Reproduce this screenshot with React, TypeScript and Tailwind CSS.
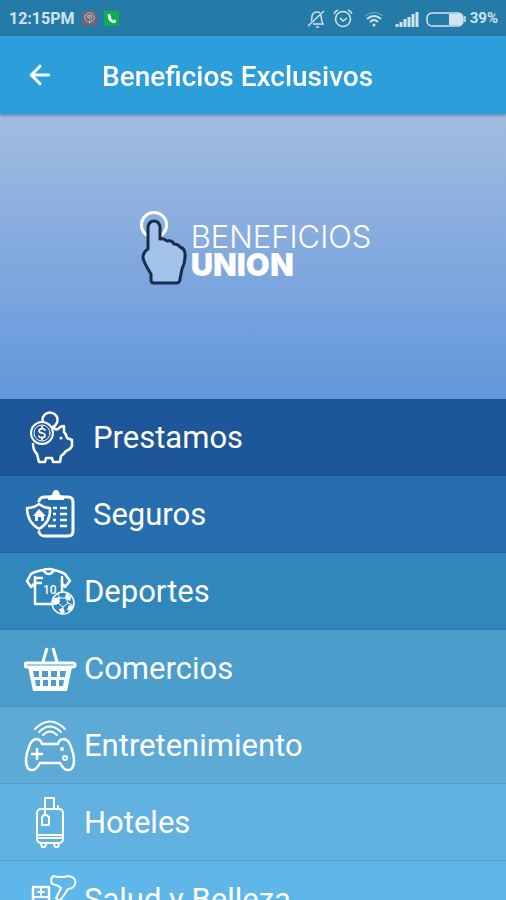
import { ArrowLeft } from "lucide-react";
import type { ReactNode } from "react";

const PrestamosIcon = () => (
    <>
        <circle cx="26" cy="10" r="7.500" />
        <path d="M30 18q3 3 5 0q2-2 5-2v6q2 2 3 6l5 2v6q-2 4-6 5q-2 3-5 5l-1 6h-7l-1-4h-6l-1 4h-6l-2-8q-4-4-4-10" />
        <circle cx="18" cy="23" r="11" strokeWidth="2" className="fill-[#1e5799]" />
        <circle cx="18" cy="23" r="8" strokeWidth="1" />
        <path d="M21 20q-1-1.500-3-1.500t-3 2q0 2 3 2.500t3 2.500q0 2-3 2t-3-1.500M18 16.500v2M18 28v1.500" strokeWidth="1.750" />
        <circle cx="37" cy="28" r="1.500" fill="currentColor" stroke="none" />
    </>
);

const SegurosIcon = () => (
    <>
        <path d="M15 14q1-4 6-4h23q5 0 5 5v29q0 5-5 5H21q-5 0-6-4" strokeWidth="3" />
        <path d="M24 13V9l4-1q1-5 4-5t4 5l4 1v4z" fill="currentColor" stroke="none" />
        <path d="M29 21h4M36 21h7M29 27h3M36 27h7M29 33h3M36 33h7M24 39h8M36 39h7" strokeWidth="2.500" strokeLinecap="butt" />
        <path d="M15 17q5 4 11 4q1 14-11 21q-12-7-12-21q7 0 12-4z" className="fill-[#276eae]" />
        <path d="M15 22l7 7h-2v5h-3v-4h-3v4h-3v-5H9z" fill="currentColor" stroke="none" />
    </>
);

const DeportesIcon = () => (
    <>
        <path d="M19 6q6 8 11 0M19 6Q9 8 7 10l-4 7l4 6l4-4v21h17M30 6q8 2 11 4l5 7l-5 6l-3-4v8M19 6q6-2 11 0M11 13v6M38 13v6M11 14h7M11 19h6" />
        <text x="19" y="30" className="font-[Roboto] text-[12px] font-medium" fill="currentColor" stroke="none">10</text>
        <circle cx="39" cy="39" r="11" strokeWidth="1.500" className="fill-[#3087bb]" />
        <path d="M36 34h6l2 5l-5 4l-5-4zM36 34l-2-4M42 34l2-4M44 39l5 2M39 43v4M34 39l-5 2" strokeWidth="1" />
        <path d="M30 34l5-1l1 5l-4 3l-4-2zM42 29l5 4l-1 4l-5-3zM45 41l4 1l-2 5l-4-1zM35 45l4-1l2 4l-4 2z" fill="currentColor" stroke="none" />
    </>
);

const ComerciosIcon = () => (
    <>
        <path d="M23 7l-4 14M29 7l4 14" strokeWidth="3" strokeLinecap="butt" />
        <rect x="1" y="22" width="50" height="4" rx="2" strokeWidth="3" />
        <path
            d="M4 26h44l-5 24H9zM9 30l1 6h5v-6zM18 30v6h6v-6zM27 30v6h6v-6zM36 30v6h5l1-6zM11 39l1 6h4v-6zM19 39v6h5v-6zM27 39v6h5v-6zM35 39v6h4l1-6z"
            fill="currentColor"
            fillRule="evenodd"
            stroke="none"
        />
    </>
);

const EntretenimientoIcon = () => (
    <>
        <path d="M11 11q15-15 30 0M15 14q11-11 22 0M19 17q7-7 14 0" strokeWidth="2" />
        <path d="M18 26q-1-5-6-5q-5 1-7 8q-3 7-3 13q0 11 7 10q3 0 7-7h20q4 7 7 7q7 1 7-10q0-6-3-13q-2-7-7-8q-5 0-6 5z" />
        <path d="M13 31v10M8 36h10" />
        <circle cx="38" cy="31" r="2" fill="currentColor" stroke="none" />
        <circle cx="41" cy="40" r="2" strokeWidth="2" />
    </>
);

const HotelesIcon = () => (
    <>
        <rect x="13" y="14" width="26" height="34" rx="4" strokeWidth="2" />
        <path d="M13 40h26M13 43h26M21 19V3h9v11M34 13v-2M18 22l3-3l4 3v8h-7zM17 49l1 3h3l1-3M30 49l1 3h3l1-3" strokeWidth="2" />
    </>
);

const SaludIcon = () => (
    <>
        <rect x="9" y="15" width="16" height="34" />
        <path d="M17 17v6M14 20h6M9 25h16M13 29h2M19 29h2" strokeWidth="2" />
        <path d="M29 4q8 2 16 0q8 2 6 8q-2 5-7 5l-8 12l-4-3l5-10q-3-3-9-4q-2-5 1-8z" strokeWidth="2" />
    </>
);

type Category = {
    name: string;
    icon: ReactNode;
    row: string;
    gap: string;
};

const categories: Category[] = [
    { name: "Prestamos", icon: <PrestamosIcon />, row: "bg-[#1e5799] border-[#1c5190]", gap: "gap-4" },
    { name: "Seguros", icon: <SegurosIcon />, row: "bg-[#276eae] border-[#2467a5]", gap: "gap-4" },
    { name: "Deportes", icon: <DeportesIcon />, row: "bg-[#3087bb] border-[#2b7cad]", gap: "gap-[7px]" },
    { name: "Comercios", icon: <ComerciosIcon />, row: "bg-[#4b9dcb] border-[#4591be]", gap: "gap-[7px]" },
    { name: "Entretenimiento", icon: <EntretenimientoIcon />, row: "bg-[#5eaad6] border-[#559cc6]", gap: "gap-[7px]" },
    { name: "Hoteles", icon: <HotelesIcon />, row: "bg-[#61b2e0] border-[#559fc9]", gap: "gap-[7px]" },
    { name: "Salud y Belleza", icon: <SaludIcon />, row: "bg-[#5eb6e9] border-[#54a2d0]", gap: "gap-[7px]" },
];

const StatusIcons = () => (
    <svg viewBox="0 0 160 20" className="h-5 w-40" fill="none" stroke="currentColor" strokeWidth="1.500">
        {/* muted bell */}
        <path d="M1 17L17 2M4 12q1-1 1-5q1-4 5-4q2 0 3 1M14 6q0 5 2 9H6M9 18h3" />
        {/* alarm clock */}
        <circle cx="36" cy="10" r="7.500" />
        <path d="M33 9l3 3l4-3M27 5q1-3 4-4M45 5q-1-3-4-4" />
        {/* wifi */}
        <path d="M58 7q9-7 18 0" strokeWidth="1" opacity="0.5" />
        <path d="M60 10q7-6 14 0M63 13q4-4 8 0" strokeWidth="2" />
        <circle cx="67" cy="16" r="1.500" fill="currentColor" stroke="none" />
        {/* signal */}
        <path d="M90 18v-3M94 18v-5M98 18V10M102 18V8M106 18V5M110 18V3" strokeWidth="3" />
        {/* battery */}
        <rect x="120" y="4" width="36" height="13" rx="5" />
        <path d="M142 5h11q3 1 3 5t-3 6h-11z" fill="currentColor" stroke="none" />
        <path d="M158 7v6" />
    </svg>
);

const StatusBar = () => (
    <div className="flex h-9 shrink-0 items-center justify-between bg-[#247ba8] pt-px pr-2 pl-[9px] text-[#cfe4ef]">
        <div className="flex items-center gap-[7px]">
            <span className="text-base font-bold">12:15PM</span>
            <svg viewBox="0 0 16 16" className="size-[15px]" fill="none" stroke="#c4bfc6">
                <rect width="16" height="16" rx="3" fill="#6b6876" stroke="none" />
                <circle cx="8" cy="7" r="5" />
                <path d="M5 5l5 5M6 8l4-4M8 10v3M6 5h4v3" />
            </svg>
            <svg viewBox="0 0 16 16" className="size-[15px]">
                <rect width="16" height="16" fill="#0bb04c" />
                <path d="M4 4l2-1l2 3l-1 1q1 2 3 3l1-1l2 1q0 2-2 3q-6-1-7-7z" fill="white" />
            </svg>
        </div>
        <div className="flex items-center gap-[3px]">
            <StatusIcons />
            <span className="text-[15px] font-bold">39%</span>
        </div>
    </div>
);

const App = () => {
    return (
        <div className="flex h-screen flex-col overflow-hidden bg-[#5eb6e9] font-[Roboto,sans-serif] text-white">
            <StatusBar />

            {/* App bar */}
            <header className="z-10 flex h-[78px] shrink-0 items-center gap-[47px] bg-[#2c9fda] px-[25px] pt-1 shadow-[0_1px_3px_rgba(60,80,130,0.7)]">
                <button type="button" aria-label="Volver" className="pb-1">
                    <ArrowLeft className="size-[30px]" strokeWidth={2.5} />
                </button>
                <h1 className="text-[28px] font-medium whitespace-nowrap">Beneficios Exclusivos</h1>
            </header>

            <main className="min-h-0 flex-1 overflow-y-auto [scrollbar-width:none]">
                {/* Brand banner */}
                <section className="flex h-[285px] items-center justify-center gap-1 bg-linear-to-b from-[#a2bce0] to-[#6296db] pb-4 pl-1">
                    <svg viewBox="0 0 48 76" className="h-[76px] w-12 shrink-0" fill="none" strokeLinejoin="round">
                        <circle cx="15" cy="14" r="12.500" stroke="white" strokeWidth="3" />
                        <path
                            d="M9 38V16q1-6 6-6t6 6v12q4-1 7 2q5-1 7 3q4 0 6 3q6 2 5 10q0 6-3 12l-2 10v1q-1 3-3 3H15q-3 0-3-3v-6Q5 52 4 47q0-6 5-9z"
                            fill="#a2c1eb"
                            stroke="#142f4b"
                            strokeWidth="3"
                        />
                    </svg>
                    <div className="pt-1 font-[Inter,sans-serif] text-[31px] leading-7">
                        <p className="font-light">BENEFICIOS</p>
                        <p className="font-black">UNION</p>
                    </div>
                </section>

                <nav>
                    {categories.map((category) => (
                        <a
                            key={category.name}
                            href="#"
                            className={`flex h-[77px] items-center border-b pt-[2px] pl-6 ${category.gap} ${category.row}`}
                        >
                            <svg
                                viewBox="0 0 53 57"
                                className="h-[57px] w-[53px] shrink-0"
                                fill="none"
                                stroke="currentColor"
                                strokeWidth="2.500"
                                strokeLinecap="round"
                                strokeLinejoin="round"
                            >
                                {category.icon}
                            </svg>
                            <span className="text-[31px] whitespace-nowrap">{category.name}</span>
                        </a>
                    ))}
                </nav>
            </main>
        </div>
    );
};

export default App;
